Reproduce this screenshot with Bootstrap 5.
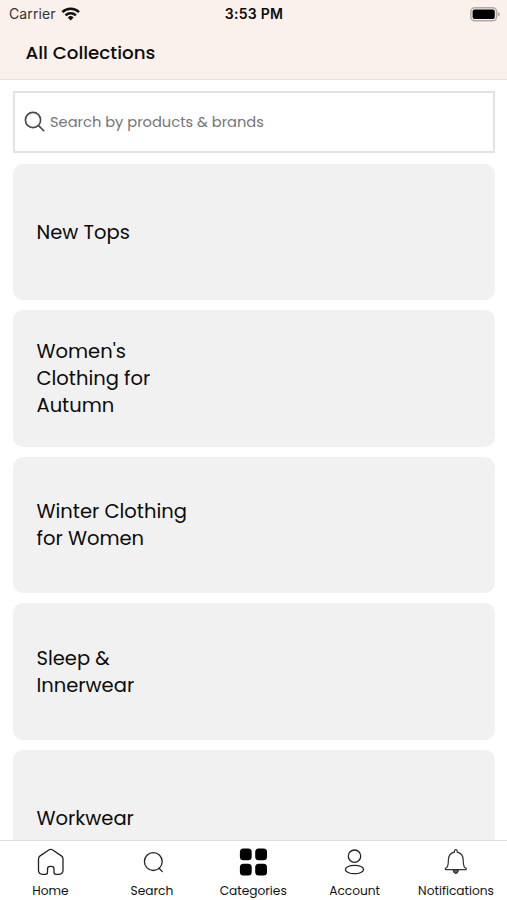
<!DOCTYPE html>
<html lang="en">
<head>
<meta charset="utf-8">
<meta name="viewport" content="width=device-width, initial-scale=1">
<title>All Collections</title>
<link href="https://cdn.jsdelivr.net/npm/bootstrap@5.3.0/dist/css/bootstrap.min.css" rel="stylesheet">
<style>
body { font-family: Poppins, Inter, sans-serif; color: #0b0b0b; }
.app-header { background: #faf1ed; height: 80px; border-bottom: 1px solid #e9e3e0; }
.status-bar { height: 28px; padding: 0 7px 0 9px; font-family: Inter, sans-serif; font-size: 14px; line-height: 28px; }
.carrier { color: #333; letter-spacing: .1px; }
.clock { font-weight: 600; letter-spacing: .3px; margin-left: -1px; }
.page-title { font-size: 18.3px; font-weight: 500; line-height: 27px; margin: 11px 0 0 25.5px; }
.content { padding: 11px 12px 0 13px; }
.search-box { height: 62px; border: 2px solid #e1e3e3; padding-left: 9px; margin-bottom: 11px; }
.search-box input { font-size: 14.65px; padding: 2px 0 0 4px; }
.search-box input::placeholder { color: #757575; opacity: 1; }
.collections { gap: 10.2px; }
.collection { height: 136.3px; border-radius: 10px; background: #f1f1f1; padding-left: 23.5px; font-size: 19.5px; line-height: 27.3px; }
.collection span { width: 160px; padding-top: .4px; }
.tab-bar { height: 60px; border-top: 1px solid #dedede; }
.tab { width: 20%; font-size: 12.2px; line-height: 18px; color: #111; padding: 6px 0 0 1px; }
.tab svg { margin-bottom: 5px; }
.tab span { margin-left: -1.5px; }
</style>
<script src="https://cdn.jsdelivr.net/npm/bootstrap@5.3.0/dist/js/bootstrap.bundle.min.js"></script>
</head>
<body class="vh-100 overflow-hidden d-flex flex-column bg-white">
<header class="app-header flex-shrink-0">
  <div class="status-bar row g-0 align-items-center">
    <div class="col d-flex align-items-center"><span class="carrier">Carrier</span>
      <svg class="ms-1" width="21" height="14" viewBox="-2 0 21 14" fill="none" stroke="#111" stroke-width="2.5"><path d="M.4 5.200a11.800 11.800 0 0 1 16.600 0M3.500 8.400a7.500 7.500 0 0 1 10.400 0"/><path d="M5.800 10.500a4.200 4.200 0 0 1 5.800 0L8.700 13.500z" fill="#111" stroke="none"/></svg>
    </div>
    <div class="col-auto clock">3:53 PM</div>
    <div class="col d-flex justify-content-end">
      <svg width="30" height="15" viewBox="0 0 30 15"><rect x=".8" y=".8" width="25.800" height="13" rx="4" fill="#faf1ed" stroke="#b1aaa7" stroke-width="1.500"/><rect x="2.600" y="2.600" width="22.200" height="9.400" rx="2" fill="#000"/><path d="M27.900 5q2 1 2 2.300t-2 2.300z" fill="#b1aaa7"/></svg>
    </div>
  </div>
  <h1 class="page-title">All Collections</h1>
</header>
<main class="content flex-grow-1 overflow-hidden">
  <div class="search-box d-flex align-items-center">
    <svg class="flex-shrink-0" width="22" height="22" viewBox="0 0 22 22" fill="none" stroke="#484848" stroke-width="1.600"><circle cx="9" cy="9" r="7.600"/><path d="m14.400 14.400 5.800 5.800"/></svg>
    <input class="form-control border-0 shadow-none rounded-0" type="text" placeholder="Search by products &amp; brands" aria-label="Search">
  </div>
  <div class="collections d-flex flex-column">
    <div class="collection d-flex align-items-center flex-shrink-0"><span>New Tops</span></div>
    <div class="collection d-flex align-items-center flex-shrink-0"><span>Women's<br>Clothing for<br>Autumn</span></div>
    <div class="collection d-flex align-items-center flex-shrink-0"><span>Winter Clothing<br>for Women</span></div>
    <div class="collection d-flex align-items-center flex-shrink-0"><span>Sleep &amp;<br>Innerwear</span></div>
    <div class="collection d-flex align-items-center flex-shrink-0"><span>Workwear</span></div>
  </div>
</main>
<nav class="tab-bar d-flex flex-shrink-0 bg-white">
  <a class="tab d-flex flex-column align-items-center text-decoration-none" href="#">
    <svg width="30" height="30" viewBox="0 0 30 30" fill="none" stroke="#222" stroke-width="1.300" stroke-linejoin="round"><path d="M13.200 2.800 4.100 8.900Q2.500 10 2.500 12V23.300q0 4 4 4h3q2 0 2-2v-3.300q0-2.600 2.600-2.600h1.300q2.600 0 2.600 2.600v3.300q0 2 2 2h3q4 0 4-4V12q0-2-1.600-3.100L16.300 2.800q-1.600-1-3.100 0z"/></svg>
    <span>Home</span></a>
  <a class="tab d-flex flex-column align-items-center text-decoration-none" href="#">
    <svg width="30" height="30" viewBox="0 0 30 30" fill="none" stroke="#222" stroke-width="1.300" stroke-linecap="round"><circle cx="15.300" cy="14.600" r="8.900"/><path d="m21 21.300 3.300 3.300"/></svg>
    <span>Search</span></a>
  <a class="tab d-flex flex-column align-items-center text-decoration-none" href="#" aria-current="page">
    <svg width="30" height="30" viewBox="0 0 30 30" fill="#000"><rect x=".9" y="1.500" width="11.800" height="11.800" rx="3.500"/><rect x="16.200" y="1.500" width="11.800" height="11.800" rx="3.500"/><rect x=".9" y="16.800" width="11.800" height="11.800" rx="3.500"/><rect x="16.200" y="16.800" width="11.800" height="11.800" rx="3.500"/></svg>
    <span>Categories</span></a>
  <a class="tab d-flex flex-column align-items-center text-decoration-none" href="#">
    <svg width="30" height="30" viewBox="0 0 30 30" fill="none" stroke="#222" stroke-width="1.300"><circle cx="14.500" cy="9.200" r="6.200"/><ellipse cx="14.500" cy="22.500" rx="9.100" ry="4.200"/></svg>
    <span>Account</span></a>
  <a class="tab d-flex flex-column align-items-center text-decoration-none" href="#">
    <svg width="30" height="30" viewBox="0 0 30 30" fill="none" stroke="#333" stroke-width="1.200" stroke-linejoin="round"><path d="M12.400 5.200V4q0-1.300 1.400-1.300T15.200 4v1.200q6 1.400 6 7.800 0 4.800 1 6.800.5 1 2 1.600v1.200H3.400v-1.200q1.500-.6 2-1.600 1-2 1-6.800 0-6.400 6-7.800z"/><path d="M11.300 22.800q.2 3.500 2.500 3.500t2.500-3.500z" fill="#666"/></svg>
    <span>Notifications</span></a>
</nav>
</body>
</html>
